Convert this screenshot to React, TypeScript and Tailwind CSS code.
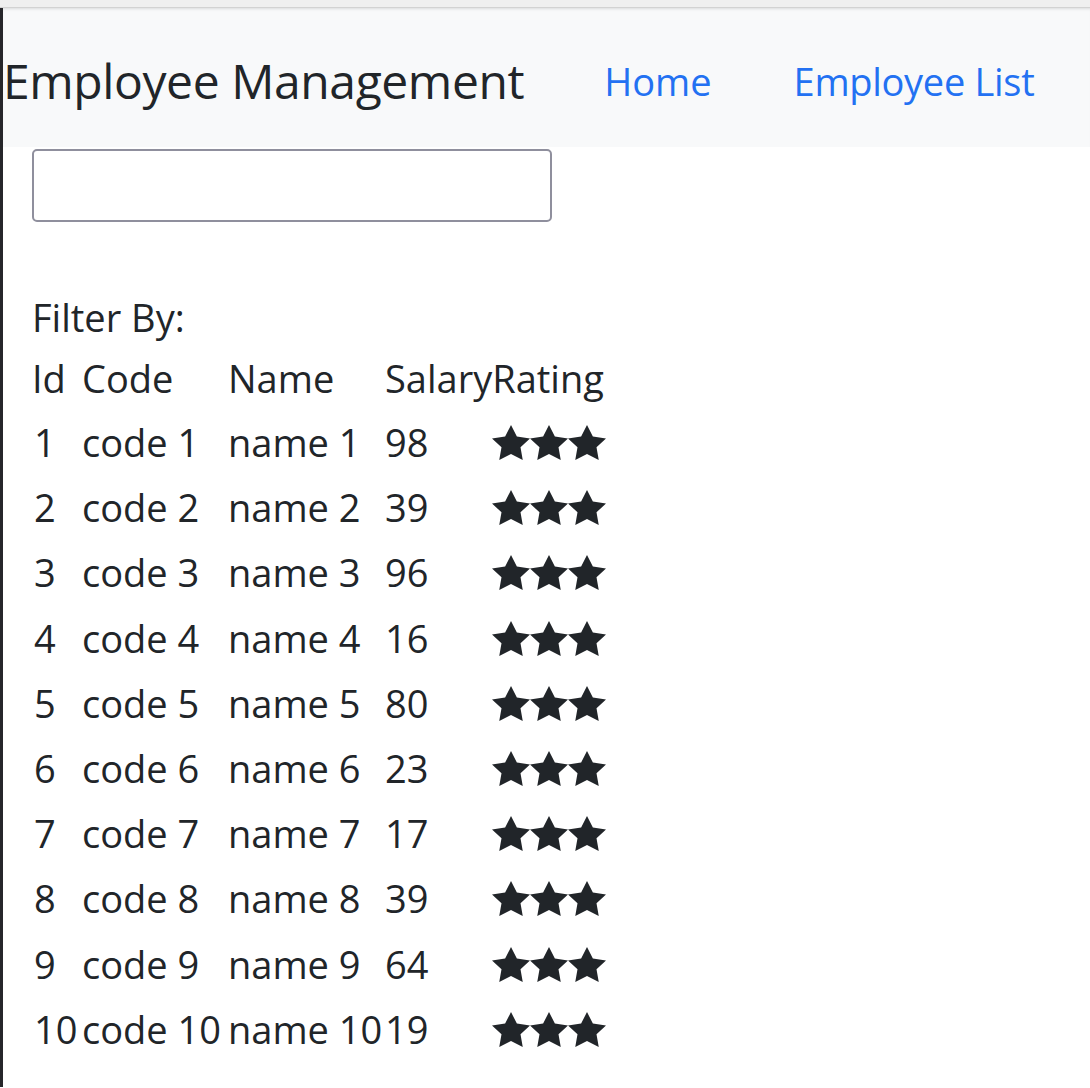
import React from 'react'

const employees = [
    { id: 1, salary: 98 },
    { id: 2, salary: 39 },
    { id: 3, salary: 96 },
    { id: 4, salary: 16 },
    { id: 5, salary: 80 },
    { id: 6, salary: 23 },
    { id: 7, salary: 17 },
    { id: 8, salary: 39 },
    { id: 9, salary: 64 },
    { id: 10, salary: 19 },
]

function Star() {
    return (
        <svg viewBox="2 2 20 19.02" preserveAspectRatio="none" className="w-[38px] h-[35px] fill-[#212529] shrink-0">
            <polygon points="12,2 15.09,8.26 22,9.27 17,14.14 18.18,21.02 12,17.77 5.82,21.02 7,14.14 2,9.27 8.91,8.26" />
        </svg>
    )
}

export default function App() {
    return (
        <div className="min-h-[1088px] bg-white text-[#212529] font-['Open_Sans',sans-serif]">
            {/* browser top strip */}
            <div className="h-[8px] bg-[#efefef] border-b border-[#d2d2d2]" />
            <div className="border-l-[3px] border-[#26262a] min-h-[1079px]">
                {/* Navbar */}
                <nav className="h-[139px] bg-[#f8f9fa] flex items-center pt-[7px] shadow-[inset_0_3px_3px_-2px_rgba(0,0,0,0.12)]">
                    <span className="text-[48px] leading-none text-[#212529] tracking-[-0.4px]">Employee Management</span>
                    <a href="#" className="ml-[80px] text-[38px] leading-none text-[#2371f2]">Home</a>
                    <a href="#" className="ml-[82px] text-[38px] leading-none tracking-[-0.3px] text-[#2371f2]">Employee List</a>
                </nav>

                <div className="pl-[29px] text-[38px]">
                    <input type="text" className="block mt-[2px] w-[520px] h-[73px] border-2 border-[#8f8f9d] rounded-[5px] bg-white outline-none" />

                    <div className="mt-[65px] h-[60px] leading-[60px]">Filter By:</div>

                    <table className="border-collapse table-fixed">
                        <colgroup>
                            <col className="w-[50px]" />
                            <col className="w-[146px]" />
                            <col className="w-[157px]" />
                            <col className="w-[107px]" />
                            <col className="w-[116px]" />
                        </colgroup>
                        <thead>
                            <tr className="h-[63px]">
                                <th className="p-0 font-normal text-left whitespace-nowrap">Id</th>
                                <th className="p-0 font-normal text-left whitespace-nowrap">Code</th>
                                <th className="p-0 font-normal text-left whitespace-nowrap">Name</th>
                                <th className="p-0 font-normal text-left whitespace-nowrap">Salary</th>
                                <th className="p-0 font-normal text-left whitespace-nowrap">Rating</th>
                            </tr>
                        </thead>
                        <tbody>
                            {employees.map((e) => (
                                <tr key={e.id} className="h-[65.2px]">
                                    <td className="p-0 pl-[2px] whitespace-nowrap">{e.id}</td>
                                    <td className="p-0 whitespace-nowrap">code {e.id}</td>
                                    <td className="p-0 whitespace-nowrap">name {e.id}</td>
                                    <td className="p-0 whitespace-nowrap">{e.salary}</td>
                                    <td className="p-0">
                                        <div className="flex">
                                            <Star />
                                            <Star />
                                            <Star />
                                        </div>
                                    </td>
                                </tr>
                            ))}
                        </tbody>
                    </table>
                </div>
            </div>
        </div>
    )
}
